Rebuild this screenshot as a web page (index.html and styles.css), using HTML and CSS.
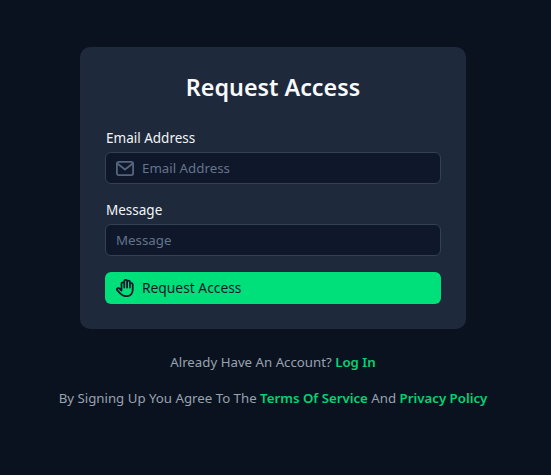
FILE: index.html
```html
<!DOCTYPE html>
<html lang="en">
<head>
<meta charset="utf-8">
<title>Request Access</title>
<link rel="stylesheet" href="styles.css">
</head>
<body>
<main class="page">
  <form class="card">
    <h1 class="title">Request Access</h1>
    <div class="field">
      <label class="label" for="email">Email Address</label>
      <div class="control">
        <svg class="icon icon-mail" viewBox="0 0 18 15" width="18" height="15" fill="none" stroke="currentColor" stroke-width="1.800" stroke-linejoin="round" stroke-linecap="round"><rect x=".9" y=".9" width="16.200" height="13.200" rx="1.800"/><path d="M1.300 2.500 9 8.500 16.700 2.500"/></svg>
        <span class="placeholder" id="email">Email Address</span>
      </div>
    </div>
    <div class="field">
      <label class="label" for="message">Message</label>
      <div class="control">
        <span class="placeholder" id="message">Message</span>
      </div>
    </div>
    <button class="submit" type="button">
      <svg class="icon" viewBox="0 0 18 18" width="18" height="18" fill="none" stroke="currentColor" stroke-width="1.800" stroke-linecap="round" stroke-linejoin="round"><path d="M5.500 11.500V4.700a1.400 1.400 0 0 1 2.800 0V8.500M8.300 8.500V2.200a1.400 1.400 0 0 1 2.800 0V8.500M11.100 8.500V3a1.400 1.400 0 0 1 2.800 0V8.500M13.900 8.500V5.500a1.400 1.400 0 0 1 2.800 0V11c0 3.700-2.800 6.200-6.500 6.200-2.800 0-4.200-.8-5.500-2.400L1.300 11.300a1.300 1.300 0 0 1 2-1.700L5.500 11.500"/></svg>
      <span class="submit-text">Request Access</span>
    </button>
  </form>
  <p class="note">Already Have An Account? <a href="#">Log In</a></p>
  <p class="note">By Signing Up You Agree To The <a href="#">Terms Of Service</a> And <a href="#">Privacy Policy</a></p>
</main>
</body>
</html>
```

FILE: styles.css
```css
* { box-sizing: border-box; }
html, body { margin: 0; height: 100%; }
body {
  background: #0a121f;
  color: #fff;
  font-family: "Noto Sans", "Open Sans", sans-serif;
  overflow: hidden;
}
.page {
  width: 546px;
  display: flex;
  flex-direction: column;
  align-items: center;
  padding-top: 47px;
}
.card {
  width: 386px;
  padding: 25px;
  background: #1e293b;
  border-radius: 10px;
  display: flex;
  flex-direction: column;
}
.title {
  margin: 0;
  height: 30px;
  font-size: 23.300px;
  line-height: 30px;
  font-weight: 600;
  text-align: center;
  color: #f8fafc;
}
.field { margin-bottom: 16px; }
.title + .field { margin-top: 26px; }
.label {
  display: block;
  height: 20px;
  margin-bottom: 4px;
  padding-left: 1px;
  font-size: 13.500px;
  line-height: 20px;
  color: #f1f5f9;
}
.control {
  height: 32px;
  background: #0f172a;
  border: 1px solid #334155;
  border-radius: 6px;
  display: flex;
  align-items: center;
  padding-left: 10px;
  gap: 8px;
}
.icon { flex: none; }
.icon-mail { color: #56657f; }
.placeholder {
  font-size: 13.300px;
  color: #64748b;
}
.submit {
  height: 32px;
  border: 0;
  border-radius: 6px;
  background: #00e07a;
  color: #0f172a;
  font: inherit;
  font-size: 13.800px;
  line-height: 18px;
  display: flex;
  align-items: center;
  gap: 8px;
  padding: 0 0 1px 11px;
}
.submit .icon { margin-top: 1px; }
.note {
  margin: 0;
  height: 20px;
  font-size: 13.250px;
  line-height: 20px;
  color: #98a2b0;
  text-align: center;
}
.card + .note { margin-top: 23px; }
.note + .note { margin-top: 16px; }
.note a {
  color: #00d474;
  font-weight: 600;
  font-size: 13.250px;
  text-decoration: none;
}
```
